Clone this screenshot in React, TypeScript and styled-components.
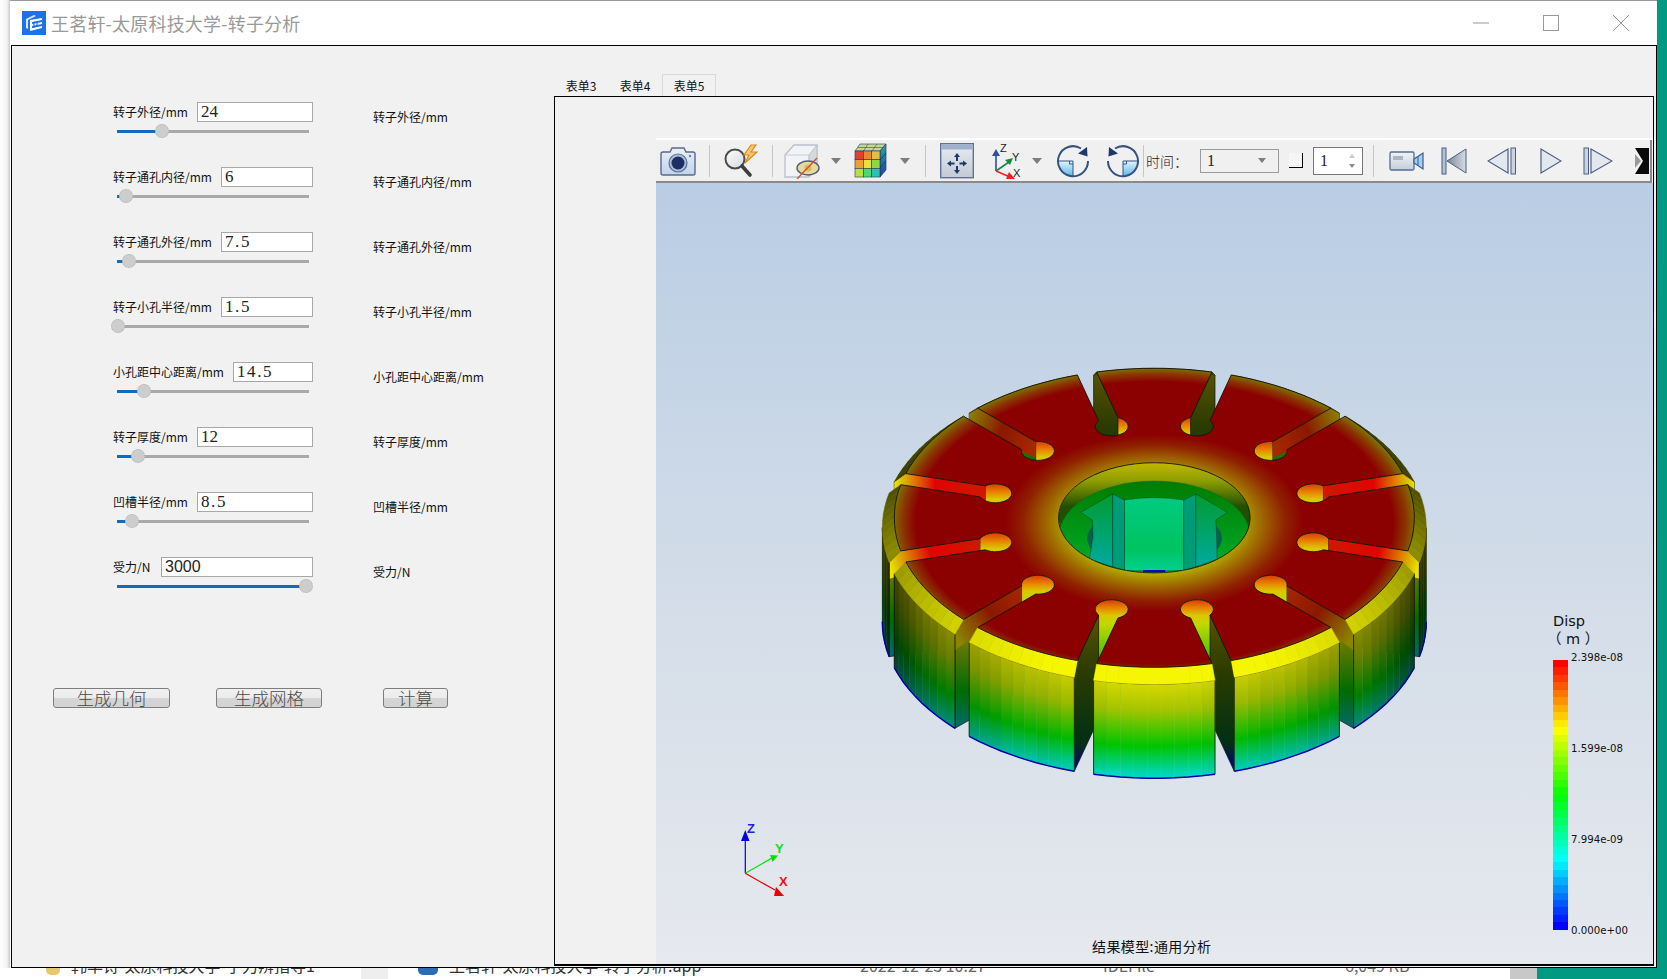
import * as React from "react";
import styled, { createGlobalStyle } from "styled-components";

const CJK = `"Noto Sans CJK SC", "Liberation Sans", sans-serif`;

const GlobalStyle = createGlobalStyle`
  html, body {
    margin: 0;
    padding: 0;
    overflow: hidden;
    background: #fff;
    font-family: ${CJK};
  }
`;

const Page = styled.div`
  width: 1667px;
  height: 979px;
  display: flex;
  flex-direction: column;
  overflow: hidden;
`;

const Upper = styled.div`
  height: 968px;
  display: flex;
`;

const LeftStrip = styled.div`
  width: 10px;
  background: linear-gradient(to right, #fff 0, #f3f3f3 7px, #c9c9c9 10px);
`;

const Desktop = styled.div`
  flex: 1;
  background: #009a82;
`;

const Window = styled.div`
  width: 1647px;
  display: flex;
  flex-direction: column;
  background: #fff;
  border-top: 1px solid #9b9b9b;
  box-sizing: border-box;
`;

const TitleBar = styled.div`
  height: 44px;
  display: flex;
  align-items: center;
  padding-left: 12px;
`;

const TitleText = styled.div`
  margin-left: 5px;
  font-size: 18px;
  letter-spacing: 0.2px;
  color: #999;
`;

const WinButtons = styled.div`
  margin-left: auto;
  display: flex;
  margin-right: 1px;
`;

const WinButton = styled.div`
  width: 70px;
  height: 44px;
  display: flex;
  align-items: center;
  justify-content: center;
`;

const Body = styled.div`
  flex: 1;
  min-height: 0;
  margin-left: 1px;
  display: flex;
  background: #f1f1f1;
  border: 1px solid #000;
  box-sizing: border-box;
`;

const LeftPanel = styled.div`
  flex: 0 0 542px;
  box-sizing: border-box;
  padding: 56px 0 0 101px;
`;

const ParamRow = styled.div`
  height: 65px;
  display: flex;
  align-items: flex-start;
`;

const ParamControl = styled.div`
  width: 200px;
`;

const ParamHead = styled.div`
  display: flex;
  align-items: center;
  height: 20px;
`;

const ParamLabel = styled.div<{ $w: number }>`
  flex: 0 0 ${({ $w }) => $w}px;
  font-size: 12px;
  line-height: 16px;
  color: #111;
  white-space: nowrap;
`;

const ParamInput = styled.input<{ $sans?: boolean; $wide?: boolean }>`
  flex: 1;
  min-width: 0;
  height: 20px;
  box-sizing: border-box;
  border: 1px solid #a8a8a8;
  outline: none;
  background: #fff;
  padding: 0 3px;
  color: #222;
  font-family: ${({ $sans }) => ($sans ? `"Liberation Sans"` : `"Liberation Serif"`)}, serif;
  font-size: ${({ $sans }) => ($sans ? 16 : 17)}px;
  letter-spacing: ${({ $wide }) => ($wide ? 1.6 : 0)}px;
`;

const SliderTrack = styled.div`
  position: relative;
  height: 3px;
  margin: 8px 4px 0;
  background: #a9a9a9;
`;

const SliderFill = styled.div`
  height: 100%;
  background: #0f6cbd;
`;

const SliderHandle = styled.div`
  position: absolute;
  top: -6px;
  width: 14px;
  height: 14px;
  margin-left: -7px;
  box-sizing: border-box;
  border-radius: 50%;
  background: #cdcdcd;
  border: 1px dotted #b4b4b4;
`;

const ParamNote = styled.div`
  margin: 7px 0 0 60px;
  font-size: 12px;
  line-height: 16px;
  color: #111;
  white-space: nowrap;
`;

const ActionRow = styled.div`
  display: flex;
  margin: 66px 0 0 -60px;
`;

const ActionButton = styled.button<{ $w: number; $gap: number }>`
  width: ${({ $w }) => $w}px;
  height: 20px;
  margin-left: ${({ $gap }) => $gap}px;
  padding: 0;
  box-sizing: border-box;
  border: 1px solid #7d7d7d;
  border-radius: 3px;
  background: linear-gradient(#f1f1f1 0, #ececec 48%, #d5d5d5 52%, #d3d3d3 100%);
  color: #4a4a4a;
  font-family: ${CJK};
  font-size: 17.5px;
  line-height: 18px;
  font-weight: 300;
`;

const TabArea = styled.div`
  flex: 1;
  min-width: 0;
  display: flex;
  flex-direction: column;
  padding: 28px 2px 1px 0;
`;

const TabBar = styled.div`
  display: flex;
  height: 22px;
`;

const Tab = styled.div<{ $active?: boolean }>`
  width: 54px;
  height: 22px;
  box-sizing: border-box;
  text-align: center;
  font-size: 12px;
  line-height: 21px;
  color: #111;
  border: 1px solid ${({ $active }) => ($active ? "#d9d9d9" : "transparent")};
  border-bottom: none;
`;

const TabPane = styled.div`
  flex: 1;
  min-height: 0;
  display: flex;
  flex-direction: column;
  border: 1px solid #000;
  border-bottom-width: 2px;
  padding: 41px 0 0 101px;
  background: #f1f1f1;
`;

const Toolbar = styled.div`
  height: 45px;
  display: flex;
  align-items: center;
  margin-right: 1px;
  box-sizing: border-box;
  background: #f0f0f0;
  border-top: 2px solid #fff;
  border-bottom: 2px solid #8a8a8a;
  color: #222;
`;

const ToolSlot = styled.div<{ $w: number; $ml?: number }>`
  flex: 0 0 ${({ $w }) => $w}px;
  margin-left: ${({ $ml }) => $ml || 0}px;
  height: 100%;
  display: flex;
  align-items: center;
  justify-content: center;
`;

const ToolSep = styled.div<{ $ml?: number }>`
  flex: 0 0 1px;
  height: 32px;
  margin-left: ${({ $ml }) => $ml || 0}px;
  background: #c6c6c6;
`;

const DropArrow = styled.div`
  width: 0;
  height: 0;
  border-left: 5px solid transparent;
  border-right: 5px solid transparent;
  border-top: 6px solid #7d7d7d;
`;

const TimeLabel = styled.div`
  margin-left: 2px;
  width: 43px;
  font-size: 14px;
  font-weight: 300;
  white-space: nowrap;
`;

const TimeSelect = styled.div`
  margin-left: 11px;
  width: 79px;
  height: 24px;
  box-sizing: border-box;
  border: 1px solid #9b9b9b;
  padding: 0 6px;
  display: flex;
  align-items: center;
  justify-content: space-between;
  font-family: "Liberation Serif", serif;
  font-size: 16px;
`;

const SmallArrow = styled.div`
  width: 0;
  height: 0;
  margin-right: 6px;
  border-left: 4px solid transparent;
  border-right: 4px solid transparent;
  border-top: 5px solid #7d7d7d;
`;

const StepBox = styled.div`
  margin-left: 10px;
  width: 14px;
  height: 15px;
  box-sizing: border-box;
  border-right: 1px solid #000;
  border-bottom: 1px solid #000;
  background: #f6f6f6;
`;

const SpinBox = styled.div`
  margin-left: 10px;
  width: 50px;
  height: 28px;
  box-sizing: border-box;
  border: 1px solid #777;
  background: #fff;
  padding: 0 6px;
  display: flex;
  align-items: center;
  justify-content: space-between;
  font-family: "Liberation Serif", serif;
  font-size: 16px;
`;

const SpinArrows = styled.div`
  display: flex;
  flex-direction: column;
  gap: 6px;
  margin-right: 1px;
`;

const SpinArrow = styled.div<{ $up?: boolean }>`
  width: 0;
  height: 0;
  border-left: 3px solid transparent;
  border-right: 3px solid transparent;
  ${({ $up }) => ($up ? "border-bottom: 4px solid #c8c8c8;" : "border-top: 4px solid #8d8d8d;")}
`;

const PlayBar = styled.div`
  flex: 1;
  height: 100%;
  margin-left: 10px;
  display: flex;
  align-items: center;
  overflow: hidden;
  border-right: 2px solid #8a8a8a;
  background: #f1f1f1;
`;

const Viewport = styled.div`
  position: relative;
  flex: 1;
  min-height: 0;
  background: linear-gradient(#b9cde4 0, #d2dce8 50%, #e6e9ee 100%);
`;

const SceneSvg = styled.svg`
  position: absolute;
  left: 0;
  top: 0;
`;

const LegendTitle = styled.div`
  position: absolute;
  left: 897px;
  top: 429px;
  font-family: "DejaVu Sans", sans-serif;
  font-size: 14.5px;
  line-height: 18px;
  color: #111;
`;

const LegendUnit = styled.div`
  position: absolute;
  left: 891px;
  top: 447px;
  font-family: "DejaVu Sans", "Noto Sans CJK SC", sans-serif;
  font-size: 14.5px;
  line-height: 18px;
  color: #111;
  white-space: pre;
`;

const band = (t: number) => {
  const stops = [
    [255, 0, 0],
    [255, 255, 0],
    [0, 255, 0],
    [0, 255, 255],
    [0, 0, 255],
  ];
  const s = Math.min(t * 4, 3.999);
  const i = Math.floor(s);
  const f = s - i;
  const c = stops[i].map((v, j) => Math.round(v + (stops[i + 1][j] - v) * f));
  return `rgb(${c.join(",")})`;
};

const BANDS = 36;
const legendStops = Array.from({ length: BANDS }, (_, i) => {
  const c = band(i / (BANDS - 1));
  return `${c} ${(i * 100) / BANDS}% ${((i + 1) * 100) / BANDS}%`;
}).join(",");

const LegendBar = styled.div`
  position: absolute;
  left: 897px;
  top: 477px;
  width: 15px;
  height: 270px;
  background: linear-gradient(${legendStops});
`;

const LegendTick = styled.div<{ $top: number }>`
  position: absolute;
  left: 915px;
  top: ${({ $top }) => $top}px;
  font-family: "DejaVu Sans", sans-serif;
  font-size: 10.2px;
  line-height: 14px;
  color: #111;
`;

const Caption = styled.div`
  position: absolute;
  left: 436px;
  top: 754px;
  font-size: 14px;
  line-height: 18px;
  letter-spacing: 0.4px;
  color: #111;
  white-space: nowrap;
`;

const Explorer = styled.div`
  height: 11px;
  display: grid;
  grid-template-columns: 71px 290px 27px 61px 411px 243px 242px 165px 27px 1fr;
  overflow: hidden;
  background: #fff;
`;

const ExplorerCell = styled.div<{ $muted?: boolean; $fill?: string }>`
  height: 11px;
  overflow: hidden;
  font-size: 16px;
  line-height: 22px;
  color: ${({ $muted }) => ($muted ? "#666" : "#333")};
  background: ${({ $fill }) => $fill || "transparent"};
  white-space: nowrap;
`;

const ExplorerText = styled.div`
  margin-top: -14px;
`;

const ExplorerIcon = styled.div<{ $ml: number; $w: number; $fill: string }>`
  width: ${({ $w }) => $w}px;
  height: 7px;
  margin-left: ${({ $ml }) => $ml}px;
  background: ${({ $fill }) => $fill};
  border-radius: 0 0 5px 5px;
`;

/* ---------- rotor geometry ---------- */

type Pt = [number, number];

const CX = 1154.3;
const CY = 517.8;
const K = 0.575;
const R1 = 260;
const R2 = 272;
const DROP = 10;
const H = 104;
const RK = 164.6;
const RH = 16.5;
const W = 10;
const D0 = RK + Math.sqrt(RH * RH - W * W);
const rad = (d: number) => (d * Math.PI) / 180;
const slots = Array.from({ length: 12 }, (_, i) => 15 + i * 30);
const D1 = Math.sqrt(R1 * R1 - W * W);
const D2 = Math.sqrt(R2 * R2 - W * W);
const DA1 = (Math.asin(W / R1) * 180) / Math.PI;
const DA2 = (Math.asin(W / R2) * 180) / Math.PI;

const proj = (x: number, y: number, z = 0): Pt => [CX + x, CY + K * y + z];
const polar = (r: number, a: number, z = 0): Pt => proj(r * Math.cos(rad(a)), r * Math.sin(rad(a)), z);
const axis = (a: number) => {
  const u: Pt = [Math.cos(rad(a)), Math.sin(rad(a))];
  const n: Pt = [-u[1], u[0]];
  return { u, n };
};
const slotPt = (a: number, d: number, off: number, z = 0): Pt => {
  const { u, n } = axis(a);
  return proj(d * u[0] + off * n[0], d * u[1] + off * n[1], z);
};
const toPath = (pts: Pt[]) => "M" + pts.map((p) => `${p[0].toFixed(1)} ${p[1].toFixed(1)}`).join("L") + "Z";
const toLine = (pts: Pt[]) => "M" + pts.map((p) => `${p[0].toFixed(1)} ${p[1].toFixed(1)}`).join("L");

const keyholeArc = (a: number): Pt[] => {
  const { u, n } = axis(a);
  const start = Math.atan2(-W, D0 - RK);
  const pts: Pt[] = [];
  for (let i = 0; i <= 24; i++) {
    const f = start - ((Math.PI * 2 + 2 * start) * i) / 24;
    const cu = RK + RH * Math.cos(f);
    const cn = RH * Math.sin(f);
    pts.push(proj(cu * u[0] + cn * n[0], cu * u[1] + cn * n[1]));
  }
  return pts;
};

const topOutline = () => {
  const pts: Pt[] = [];
  slots.forEach((a) => {
    pts.push(slotPt(a, D1, -W));
    pts.push(...keyholeArc(a));
    pts.push(slotPt(a, D1, W));
    const from = a + DA1;
    const to = a + 30 - DA1;
    for (let i = 1; i < 10; i++) pts.push(polar(R1, from + ((to - from) * i) / 10));
  });
  return toPath(pts);
};

const BORE = "M1058.5 517.8A95.8 55 0 1 0 1250.1 517.8A95.8 55 0 1 0 1058.5 517.8Z";

const scale = (hex: string, s: number) => {
  const v = [1, 3, 5].map((i) => Math.round(parseInt(hex.slice(i, i + 2), 16) * s));
  return `rgb(${v.join(",")})`;
};
const LEVELS = 40;
const shadeLevel = (a: number) => Math.round(Math.max(0.25, Math.sin(rad(a))) * LEVELS);
const bandShade = (a: number) => Math.min(1, Math.max(0.25, 0.45 + 0.6 * Math.sin(rad(a))));

const shadeLevels = Array.from({ length: LEVELS + 1 }, (_, i) => i).filter((i) => i >= LEVELS / 4);

function RotorDefs() {
  return (
    <>
      {shadeLevels.map((l) => (
        <linearGradient key={l} id={`wall${l}`} x1="0" y1="0" x2="0" y2="1">
          <stop offset="0" stopColor={scale("#d6d800", l / LEVELS)} />
          <stop offset="0.28" stopColor={scale("#a4c400", l / LEVELS)} />
          <stop offset="0.66" stopColor={scale("#00c400", l / LEVELS)} />
          <stop offset="0.98" stopColor={scale("#00d8c8", l / LEVELS)} />
        </linearGradient>
      ))}
      <linearGradient id="keyWall" x1="0" y1="0" x2="0" y2="1">
        <stop offset="0" stopColor="#d83c00" />
        <stop offset="0.07" stopColor="#e88000" />
        <stop offset="0.14" stopColor="#dcc800" />
        <stop offset="0.22" stopColor="#c0d800" />
        <stop offset="0.55" stopColor="#30c000" />
        <stop offset="1" stopColor="#00b0a0" />
      </linearGradient>
      <radialGradient
        id="topFace"
        gradientUnits="userSpaceOnUse"
        cx="0"
        cy="0"
        r="1"
        gradientTransform={`translate(${CX} ${CY + 5}) scale(262 155)`}
      >
        <stop offset="0.33" stopColor="#b2aa00" />
        <stop offset="0.4" stopColor="#a07000" />
        <stop offset="0.5" stopColor="#8f2200" />
        <stop offset="0.57" stopColor="#8b0000" />
        <stop offset="0.91" stopColor="#8b0000" />
        <stop offset="0.96" stopColor="#8a3600" />
        <stop offset="1" stopColor="#7e7400" />
      </radialGradient>
      <linearGradient id="boreWall" x1="0" y1="0" x2="0" y2="1">
        <stop offset="0" stopColor="#c0b800" />
        <stop offset="0.17" stopColor="#8c9c00" />
        <stop offset="0.4" stopColor="#205000" />
      </linearGradient>
      <linearGradient id="boreLedge" x1="0" y1="0" x2="0" y2="1">
        <stop offset="0" stopColor="#007c00" />
        <stop offset="0.6" stopColor="#00a020" />
        <stop offset="1" stopColor="#00b848" />
      </linearGradient>
      <linearGradient id="splineSide" x1="0" y1="0" x2="0" y2="1">
        <stop offset="0" stopColor="#009c30" />
        <stop offset="1" stopColor="#00aaa0" />
      </linearGradient>
      <linearGradient id="splineMid" x1="0" y1="0" x2="0" y2="1">
        <stop offset="0" stopColor="#00ca80" />
        <stop offset="0.7" stopColor="#00c460" />
        <stop offset="1" stopColor="#00d090" />
      </linearGradient>
      <clipPath id="boreClip">
        <ellipse cx="796" cy="503" rx="259" ry="165" />
      </clipPath>
    </>
  );
}

function SlotWall({ a }: { a: number }) {
  const { n } = axis(a);
  const s = n[1] > 0 ? -W : W;
  const q0 = slotPt(a, D0, s);
  const q1 = slotPt(a, D1, s);
  const q2 = slotPt(a, D2, s, DROP);
  const q3 = slotPt(a, D2, s, H);
  const q4 = slotPt(a, D0, s, H);
  const sin = Math.abs(Math.sin(rad(a)));
  const id = `slot${a}`;
  const outline = toPath([q0, q1, q2, q3, q4]);
  if (sin > 0.9) {
    return (
      <>
        <defs>
          <linearGradient id={id} gradientUnits="userSpaceOnUse" x1="0" y1={Math.min(q1[1], q0[1])} x2="0" y2={Math.max(q3[1], q4[1])}>
            <stop offset="0" stopColor="#585400" />
            <stop offset="0.35" stopColor="#2c3c00" />
            <stop offset="0.82" stopColor="#003014" />
            <stop offset="1" stopColor="#000088" />
          </linearGradient>
        </defs>
        <path d={outline} fill={`url(#${id})`} stroke="#111" strokeWidth="0.7" />
      </>
    );
  }
  // through the gap the wall runs down, in the open slot only its top strip shows
  const strip = toPath([q0, q1, q2, slotPt(a, D2, s, DROP + 16), slotPt(a, D0, s, 16)]);
  const stops =
    sin > 0.6
      ? [
          ["0", "#a82800"],
          ["0.5", "#8a1800"],
          ["1", "#8a8400"],
        ]
      : [
          ["0", "#d01800"],
          ["0.55", "#e00400"],
          ["0.92", "#dcc000"],
          ["1", "#eee400"],
        ];
  return (
    <>
      <defs>
        <linearGradient id={`${id}v`} gradientUnits="userSpaceOnUse" x1="0" y1={q2[1]} x2="0" y2={q3[1]}>
          <stop offset="0" stopColor="#7c7c00" />
          <stop offset="0.6" stopColor="#006c00" />
          <stop offset="1" stopColor="#006a70" />
        </linearGradient>
        <linearGradient id={id} gradientUnits="userSpaceOnUse" x1={q0[0]} y1={q0[1]} x2={q2[0]} y2={q2[1]}>
          {stops.map(([o, c]) => (
            <stop key={o} offset={o} stopColor={c} />
          ))}
        </linearGradient>
      </defs>
      <path d={outline} fill={`url(#${id}v)`} stroke="#111" strokeWidth="0.7" />
      <path d={strip} fill={`url(#${id})`} />
    </>
  );
}

function KeyholeWall({ a }: { a: number }) {
  const { u } = axis(a);
  const pts: Pt[] = [];
  const low: Pt[] = [];
  for (let i = 0; i <= 16; i++) {
    const f = Math.PI + (Math.PI * i) / 16;
    const x = RK * u[0] + RH * Math.cos(f);
    const y = RK * u[1] + RH * Math.sin(f);
    pts.push(proj(x, y));
    low.unshift(proj(x, y, H));
  }
  return <path d={toPath([...pts, ...low])} fill="url(#keyWall)" />;
}

function SectorWall({ a }: { a: number }) {
  const from = Math.max(a - 15 + DA2, 0.01);
  const to = Math.min(a + 15 - DA2, 179.99);
  if (to <= from) return null;
  const steps = Math.ceil((to - from) / 3);
  const strips: React.ReactNode[] = [];
  const bottom: Pt[] = [];
  const top: Pt[] = [];
  for (let i = 0; i < steps; i++) {
    const p = from + ((to - from) * i) / steps;
    const q = from + ((to - from) * (i + 1)) / steps;
    const l = shadeLevel((p + q) / 2);
    strips.push(
      <path
        key={i}
        d={toPath([polar(R2, p, DROP), polar(R2, q, DROP), polar(R2, q, H), polar(R2, p, H)])}
        fill={`url(#wall${l})`}
        stroke={`url(#wall${l})`}
        strokeWidth="0.5"
      />
    );
    bottom.push(polar(R2, p, H));
    top.push(polar(R2, p, DROP));
  }
  bottom.push(polar(R2, to, H));
  top.push(polar(R2, to, DROP));
  return (
    <>
      {strips}
      <path d={toLine(bottom)} fill="none" stroke="#0000a8" strokeWidth="1.4" />
      {from > 0.1 && <path d={toLine([polar(R2, from, DROP), polar(R2, from, H)])} stroke="#111" strokeWidth="0.8" />}
      {to < 179.9 && <path d={toLine([polar(R2, to, DROP), polar(R2, to, H)])} stroke="#111" strokeWidth="0.8" />}
      <path d={toLine(top)} fill="none" stroke="#111" strokeWidth="0.7" />
    </>
  );
}

function SectorBand({ a }: { a: number }) {
  const f1 = a - 15 + DA1;
  const t1 = a + 15 - DA1;
  const f2 = a - 15 + DA2;
  const t2 = a + 15 - DA2;
  const steps = 10;
  const strips: React.ReactNode[] = [];
  for (let i = 0; i < steps; i++) {
    const mix = (x: number, y: number, t: number) => x + (y - x) * t;
    const p1 = mix(f1, t1, i / steps);
    const q1 = mix(f1, t1, (i + 1) / steps);
    const p2 = mix(f2, t2, i / steps);
    const q2 = mix(f2, t2, (i + 1) / steps);
    const c = scale("#f6f600", bandShade((p1 + q1) / 2));
    strips.push(
      <path
        key={i}
        d={toPath([polar(R1, p1), polar(R1, q1), polar(R2, q2, DROP), polar(R2, p2, DROP)])}
        fill={c}
        stroke={c}
        strokeWidth="0.5"
      />
    );
  }
  return <>{strips}</>;
}

function BoreDetail() {
  return (
    <g transform="translate(860 350) scale(0.36996 0.33333)">
      <g clipPath="url(#boreClip)">
        <ellipse cx="796" cy="503" rx="259" ry="165" fill="url(#boreWall)" />
        <ellipse cx="796" cy="558" rx="258" ry="165" fill="url(#boreLedge)" stroke="#063" strokeWidth="1" />
        <ellipse cx="796" cy="565" rx="182" ry="92" fill="#00624c" />
        <g stroke="#0a1a0a" strokeWidth="0.9" style={{ vectorEffect: "non-scaling-stroke" }}>
          <path d="M597 487L683 432V650L620 628L630 560L628 510Z" fill="url(#splineSide)" />
          <path d="M683 432L715 450V662L683 650Z" fill="#009c78" />
          <path d="M715 450Q795 436 875 450V662H715Z" fill="url(#splineMid)" />
          <path d="M875 450L908 432V650L875 662Z" fill="#009c78" />
          <path d="M908 432L993 487L962 510L964 560L965 628L908 650Z" fill="url(#splineSide)" />
        </g>
        <rect x="765" y="660" width="60" height="8" fill="#0000c8" />
      </g>
    </g>
  );
}

function Rotor() {
  const backFirst = (list: number[]) => [...list].sort((p, q) => Math.sin(rad(p)) - Math.sin(rad(q)));
  const sectors = slots.map((s) => s - 15);
  return (
    <>
      <defs>
        <RotorDefs />
      </defs>
      {backFirst(slots).map((a) => (
        <React.Fragment key={a}>
          <KeyholeWall a={a} />
          <SlotWall a={a} />
        </React.Fragment>
      ))}
      {backFirst(sectors).map((a) => (
        <SectorWall key={a} a={a} />
      ))}
      {backFirst(sectors).map((a) => (
        <SectorBand key={a} a={a} />
      ))}
      <BoreDetail />
      <path d={topOutline() + BORE} fill="url(#topFace)" fillRule="evenodd" stroke="#141400" strokeWidth="0.9" />
    </>
  );
}

function Triad() {
  return (
    <g>
      <path d="M745.3 873.3V838" stroke="#0000e0" strokeWidth="1.2" />
      <path d="M745.3 830L749.5 841H741Z" fill="#0000e0" />
      <path d="M745.3 873.3L772 858" stroke="#00e000" strokeWidth="1.2" />
      <path d="M770 855L778 855.5L772.5 862Z" fill="#00e000" />
      <path d="M745.3 873.3L775 890" stroke="#e00000" strokeWidth="1.2" />
      <path d="M776 887L784 896H774Z" fill="#f00000" />
      <text x="747" y="833" fontFamily="Liberation Sans" fontWeight="700" fontSize="13" fill="#2020e0">Z</text>
      <text x="775" y="853" fontFamily="Liberation Sans" fontWeight="700" fontSize="13" fill="#10e010">Y</text>
      <text x="779" y="886" fontFamily="Liberation Sans" fontWeight="700" fontSize="13" fill="#f01010">X</text>
    </g>
  );
}

/* ---------- toolbar icons ---------- */

function LogoIcon() {
  return (
    <svg width="24" height="24" viewBox="0 0 24 24">
      <rect width="24" height="24" fill="#1a73e8" />
      <path d="M4 8L12 4L14 5L6 9V18L4 17Z" fill="#dbe9fb" />
      <path d="M8 9L20 7V9L10 11V13L20 11V13L10 15V17L20 15V17L8 20Z" fill="#fff" />
      <path d="M12 11.5V17M15 11V16" stroke="#1a73e8" strokeWidth="1.2" />
    </svg>
  );
}

function CameraIcon() {
  return (
    <svg width="36" height="32" viewBox="0 0 36 32">
      <defs>
        <linearGradient id="camBody" x1="0" y1="0" x2="0" y2="1">
          <stop offset="0" stopColor="#eaf0f8" />
          <stop offset="1" stopColor="#c3d3e8" />
        </linearGradient>
      </defs>
      <path
        d="M3 7H10L12 3H24L26 7H33Q35 7 35 9V28Q35 30 33 30H3Q1 30 1 28V9Q1 7 3 7Z"
        fill="url(#camBody)"
        stroke="#58698c"
        strokeWidth="1.4"
      />
      <circle cx="18" cy="18" r="9" fill="#a9bcd9" stroke="#5c6f97" strokeWidth="1.2" />
      <circle cx="18" cy="18" r="6.5" fill="#1b2f63" />
      <circle cx="30" cy="11" r="1.2" fill="#6b7fa6" />
    </svg>
  );
}

function SearchBoltIcon() {
  return (
    <svg width="36" height="34" viewBox="0 0 36 34">
      <defs>
        <linearGradient id="lens" x1="0" y1="0" x2="1" y2="1">
          <stop offset="0" stopColor="#fbfbfb" />
          <stop offset="1" stopColor="#d5dbe4" />
        </linearGradient>
      </defs>
      <circle cx="12" cy="15" r="9.5" fill="url(#lens)" stroke="#4b4b4b" strokeWidth="2" />
      <path d="M19 22L27 31" stroke="#3e3e3e" strokeWidth="3.6" strokeLinecap="round" />
      <path d="M28 1L21 11H26L22 19L34 8H28L33 1Z" fill="#f3c879" stroke="#e08a17" strokeWidth="1.2" />
    </svg>
  );
}

function HideCubeIcon() {
  return (
    <svg width="36" height="36" viewBox="0 0 36 36">
      <path d="M1 12L10 2H33V24L25 34H1Z" fill="#f1f3f6" stroke="#b9c0cc" strokeWidth="1.3" />
      <path d="M25 12L33 2V24L25 34Z" fill="#d5d9e0" stroke="#b9c0cc" strokeWidth="1" />
      <path d="M1 12H25V34" fill="none" stroke="#c8ced8" strokeWidth="1" />
      <ellipse cx="24" cy="25" rx="11" ry="7" fill="#e6d9a0" stroke="#4d5c7c" strokeWidth="1.4" />
      <circle cx="24" cy="25" r="3.6" fill="#d6bb5a" />
      <path d="M13 36L33 15" stroke="#d0522a" strokeWidth="1.4" />
    </svg>
  );
}

function ColorCubeIcon() {
  const front = [
    ["#e04030", "#e88a30", "#e0c040"],
    ["#f0a030", "#e8e040", "#90d840"],
    ["#b8e040", "#50d870", "#30c0b0"],
  ];
  return (
    <svg width="33" height="35" viewBox="0 0 33 35">
      <defs>
        <linearGradient id="cubeSide" x1="0" y1="0" x2="0" y2="1">
          <stop offset="0" stopColor="#2aa8a0" />
          <stop offset="1" stopColor="#1a3fa8" />
        </linearGradient>
      </defs>
      <path d="M6 1H32L26 8H1Z" fill="#c7d98e" stroke="#3a4a6a" strokeWidth="0.7" />
      <path d="M14 1L9.5 8M23 1L18 8M4 4.5H29" stroke="#3a4a6a" strokeWidth="0.6" />
      <path d="M26 8L32 1V27L26 34Z" fill="url(#cubeSide)" stroke="#223a6a" strokeWidth="0.7" />
      <path d="M26 17L32 10M26 25L32 18" stroke="#0f2c66" strokeWidth="0.7" />
      {front.map((row, r) =>
        row.map((c, i) => <rect key={`${r}${i}`} x={1 + i * 8.33} y={8 + r * 8.67} width="8.33" height="8.67" fill={c} stroke="#2a3450" strokeWidth="0.6" />)
      )}
    </svg>
  );
}

function FitIcon() {
  return (
    <svg width="34" height="36" viewBox="0 0 34 36">
      <defs>
        <linearGradient id="fitBody" x1="0" y1="0" x2="0" y2="1">
          <stop offset="0" stopColor="#e8edf3" />
          <stop offset="1" stopColor="#c3cad5" />
        </linearGradient>
      </defs>
      <rect x="0.7" y="0.7" width="32.6" height="34" fill="url(#fitBody)" stroke="#5d7296" strokeWidth="1.4" />
      <rect x="1.5" y="1.5" width="31" height="5" fill="#9db0cc" />
      <path d="M17 10L20 14H18V18H16V14H14ZM17 31L14 27H16V23H18V27H20ZM7 20.5L11 17.5V19.5H14.5V21.5H11V23.5ZM27 20.5L23 23.5V21.5H19.5V19.5H23V17.5Z" fill="#1d3869" />
    </svg>
  );
}

function AxesIcon() {
  return (
    <svg width="34" height="36" viewBox="0 0 34 36">
      <path d="M7 28V10" stroke="#2b4ea8" strokeWidth="1.6" />
      <path d="M7 6L11 13H3Z" fill="#2b4ea8" />
      <path d="M7 28L20 19" stroke="#168a40" strokeWidth="1.6" />
      <path d="M24 15L21 22L16 17Z" fill="#168a40" />
      <path d="M7 28L21 34" stroke="#e22" strokeWidth="1.6" />
      <path d="M26 36L17 36L20 29Z" fill="#e22" />
      <text x="11" y="9" fontFamily="Liberation Sans" fontSize="11" fill="#222">Z</text>
      <text x="23" y="18" fontFamily="Liberation Sans" fontSize="11" fill="#222">Y</text>
      <text x="24" y="34" fontFamily="Liberation Sans" fontSize="11" fill="#222">X</text>
    </svg>
  );
}

function RotateIcon({ flip }: { flip?: boolean }) {
  return (
    <svg width="34" height="34" viewBox="0 0 34 34" style={flip ? { transform: "scaleX(-1)" } : undefined}>
      <defs>
        <linearGradient id="rotFill" x1="0" y1="0" x2="0" y2="1">
          <stop offset="0" stopColor="#e5f3fb" />
          <stop offset="1" stopColor="#5db9ea" />
        </linearGradient>
      </defs>
      <path d="M2 17H17V32A15 15 0 0 1 2 17Z" fill="url(#rotFill)" />
      <path d="M17 20H13.5V17" fill="none" stroke="#2c4a78" strokeWidth="0.9" />
      <path d="M25 4.5A15 15 0 1 0 32 17" fill="none" stroke="#35527f" strokeWidth="2" />
      <path d="M2 17H17V32" fill="none" stroke="#35527f" strokeWidth="1" />
      <path d="M31 3L31.5 12.5L22 9.5Z" fill="#1d3869" />
    </svg>
  );
}

function VideoIcon() {
  return (
    <svg width="36" height="22" viewBox="0 0 36 22">
      <defs>
        <linearGradient id="vidBody" x1="0" y1="0" x2="0" y2="1">
          <stop offset="0" stopColor="#f1f4f8" />
          <stop offset="1" stopColor="#c5cedb" />
        </linearGradient>
      </defs>
      <rect x="1" y="2" width="24" height="18" rx="1.5" fill="url(#vidBody)" stroke="#566c92" strokeWidth="1.3" />
      <rect x="4" y="6" width="10" height="4" fill="#aeb6c2" />
      <path d="M25 9L34 3V19L25 13Z" fill="#a8cdea" stroke="#3a5c8c" strokeWidth="1.2" />
      <path d="M29 6.5V15.5" stroke="#3a7cc0" strokeWidth="1.4" />
    </svg>
  );
}

function FirstIcon() {
  return (
    <svg width="26" height="28" viewBox="0 0 26 28">
      <defs>
        <linearGradient id="firstFill" x1="0" y1="0" x2="1" y2="0">
          <stop offset="0" stopColor="#7f8794" />
          <stop offset="1" stopColor="#d8dce3" />
        </linearGradient>
      </defs>
      <rect x="1" y="1" width="4" height="26" fill="#b5c0d2" stroke="#495e86" />
      <path d="M25 2V26L6 14Z" fill="url(#firstFill)" stroke="#495e86" strokeWidth="1" />
    </svg>
  );
}

function PrevIcon() {
  return (
    <svg width="30" height="28" viewBox="0 0 30 28">
      <path d="M21 2V26L1 14Z" fill="#e3e8ef" stroke="#495e86" strokeWidth="1.2" />
      <rect x="24" y="1" width="4.5" height="26" fill="#cbd3e0" stroke="#495e86" />
    </svg>
  );
}

function PlayIcon() {
  return (
    <svg width="22" height="28" viewBox="0 0 22 28">
      <path d="M1 2V26L21 14Z" fill="#e3e8ef" stroke="#495e86" strokeWidth="1.2" />
    </svg>
  );
}

function NextIcon() {
  return (
    <svg width="30" height="28" viewBox="0 0 30 28">
      <rect x="1" y="1" width="4.5" height="26" fill="#cbd3e0" stroke="#495e86" />
      <path d="M8 2V26L29 14Z" fill="#e3e8ef" stroke="#495e86" strokeWidth="1.2" />
    </svg>
  );
}

function LastIcon() {
  return (
    <svg width="14" height="26" viewBox="0 0 14 26">
      <path d="M0 0H14V26H0L8 13Z" fill="#0a0a0a" />
      <path d="M0 6L6 13L0 20Z" fill="#9a9a9a" />
    </svg>
  );
}

const params = [
  { label: "转子外径/mm", value: "24", w: 84, pos: 45 },
  { label: "转子通孔内径/mm", value: "6", w: 108, pos: 9 },
  { label: "转子通孔外径/mm", value: "7.5", w: 108, pos: 12, wide: true },
  { label: "转子小孔半径/mm", value: "1.5", w: 108, pos: 1, wide: true },
  { label: "小孔距中心距离/mm", value: "14.5", w: 120, pos: 26.5, wide: true },
  { label: "转子厚度/mm", value: "12", w: 84, pos: 21 },
  { label: "凹槽半径/mm", value: "8.5", w: 84, pos: 15, wide: true },
  { label: "受力/N", value: "3000", w: 48, pos: 189, sans: true },
];

function Param(props: (typeof params)[number]) {
  const { label, value, w, pos, wide, sans } = props;
  return (
    <ParamRow>
      <ParamControl>
        <ParamHead>
          <ParamLabel $w={w}>{label}</ParamLabel>
          <ParamInput defaultValue={value} $wide={wide} $sans={sans} />
        </ParamHead>
        <SliderTrack>
          <SliderFill style={{ width: pos }} />
          <SliderHandle style={{ left: pos }} />
        </SliderTrack>
      </ParamControl>
      <ParamNote>{label}</ParamNote>
    </ParamRow>
  );
}

export default function App() {
  return (
    <Page>
      <GlobalStyle />
      <Upper>
        <LeftStrip />
        <Window>
          <TitleBar>
            <LogoIcon />
            <TitleText>王茗轩-太原科技大学-转子分析</TitleText>
            <WinButtons>
              <WinButton>
                <svg width="16" height="16" viewBox="0 0 16 16">
                  <path d="M0 8H16" stroke="#999" strokeWidth="1" />
                </svg>
              </WinButton>
              <WinButton>
                <svg width="16" height="16" viewBox="0 0 16 16">
                  <rect x="0.5" y="0.5" width="15" height="15" fill="none" stroke="#999" />
                </svg>
              </WinButton>
              <WinButton>
                <svg width="16" height="16" viewBox="0 0 16 16">
                  <path d="M0 0L16 16M16 0L0 16" stroke="#999" strokeWidth="1" />
                </svg>
              </WinButton>
            </WinButtons>
          </TitleBar>
          <Body>
            <LeftPanel>
              {params.map((p) => (
                <Param key={p.label} {...p} />
              ))}
              <ActionRow>
                <ActionButton $w={117} $gap={0}>生成几何</ActionButton>
                <ActionButton $w={106} $gap={46}>生成网格</ActionButton>
                <ActionButton $w={65} $gap={61}>计算</ActionButton>
              </ActionRow>
            </LeftPanel>
            <TabArea>
              <TabBar>
                <Tab>表单3</Tab>
                <Tab>表单4</Tab>
                <Tab $active>表单5</Tab>
              </TabBar>
              <TabPane>
                <Toolbar>
                  <ToolSlot $w={44}>
                    <CameraIcon />
                  </ToolSlot>
                  <ToolSep $ml={9} />
                  <ToolSlot $w={62}>
                    <SearchBoltIcon />
                  </ToolSlot>
                  <ToolSep />
                  <ToolSlot $w={58}>
                    <HideCubeIcon />
                  </ToolSlot>
                  <ToolSlot $w={10}>
                    <DropArrow />
                  </ToolSlot>
                  <ToolSlot $w={59}>
                    <ColorCubeIcon />
                  </ToolSlot>
                  <ToolSlot $w={10}>
                    <DropArrow />
                  </ToolSlot>
                  <ToolSep $ml={15} />
                  <ToolSlot $w={62}>
                    <FitIcon />
                  </ToolSlot>
                  <ToolSlot $w={36}>
                    <AxesIcon />
                  </ToolSlot>
                  <ToolSlot $w={10} $ml={8}>
                    <DropArrow />
                  </ToolSlot>
                  <ToolSlot $w={62}>
                    <RotateIcon />
                  </ToolSlot>
                  <ToolSlot $w={38}>
                    <RotateIcon flip />
                  </ToolSlot>
                  <ToolSep $ml={1} />
                  <TimeLabel>时间：</TimeLabel>
                  <TimeSelect>
                    1
                    <SmallArrow />
                  </TimeSelect>
                  <StepBox />
                  <SpinBox>
                    1
                    <SpinArrows>
                      <SpinArrow $up />
                      <SpinArrow />
                    </SpinArrows>
                  </SpinBox>
                  <ToolSep $ml={10} />
                  <PlayBar>
                    <ToolSlot $w={45}>
                      <VideoIcon />
                    </ToolSlot>
                    <ToolSlot $w={49}>
                      <FirstIcon />
                    </ToolSlot>
                    <ToolSlot $w={47}>
                      <PrevIcon />
                    </ToolSlot>
                    <ToolSlot $w={52}>
                      <PlayIcon />
                    </ToolSlot>
                    <ToolSlot $w={42}>
                      <NextIcon />
                    </ToolSlot>
                    <ToolSlot $w={14} $ml={16}>
                      <LastIcon />
                    </ToolSlot>
                  </PlayBar>
                </Toolbar>
                <Viewport>
                  <SceneSvg width="996" height="783" viewBox="656 183 996 783">
                    <Rotor />
                    <Triad />
                  </SceneSvg>
                  <LegendTitle>Disp</LegendTitle>
                  <LegendUnit>（ m ）</LegendUnit>
                  <LegendBar />
                  <LegendTick $top={468}>2.398e-08</LegendTick>
                  <LegendTick $top={559}>1.599e-08</LegendTick>
                  <LegendTick $top={650}>7.994e-09</LegendTick>
                  <LegendTick $top={741}>0.000e+00</LegendTick>
                  <Caption>结果模型:通用分析</Caption>
                </Viewport>
              </TabPane>
            </TabArea>
          </Body>
        </Window>
        <Desktop />
      </Upper>
      <Explorer>
        <ExplorerCell>
          <ExplorerIcon $ml={46} $w={14} $fill="#e8c66a" />
        </ExplorerCell>
        <ExplorerCell>
          <ExplorerText>韩丰诗-太原科技大学-子力辨指导1</ExplorerText>
        </ExplorerCell>
        <ExplorerCell $fill="#eeeeee" />
        <ExplorerCell>
          <ExplorerIcon $ml={30} $w={20} $fill="#2a6db5" />
        </ExplorerCell>
        <ExplorerCell>
          <ExplorerText>王茗轩-太原科技大学-转子分析.app</ExplorerText>
        </ExplorerCell>
        <ExplorerCell $muted>
          <ExplorerText>2022-12-23 10:27</ExplorerText>
        </ExplorerCell>
        <ExplorerCell $muted>
          <ExplorerText>IDEFile</ExplorerText>
        </ExplorerCell>
        <ExplorerCell $muted>
          <ExplorerText>6,049 KB</ExplorerText>
        </ExplorerCell>
        <ExplorerCell $fill="#c8c8c8" />
        <ExplorerCell $fill="#009a82" />
      </Explorer>
    </Page>
  );
}
